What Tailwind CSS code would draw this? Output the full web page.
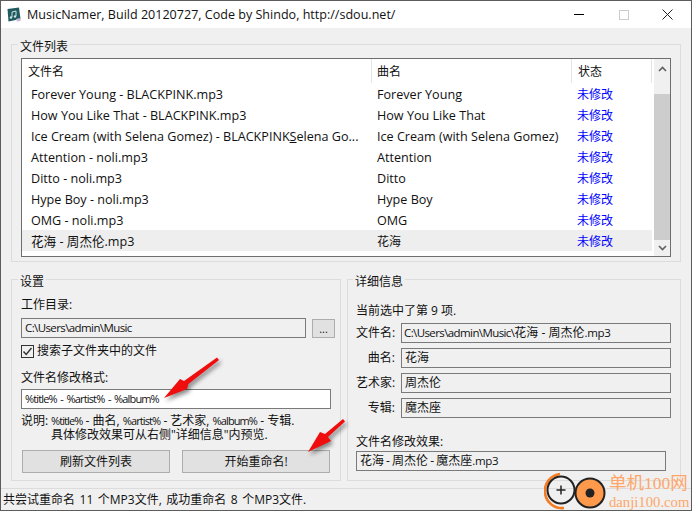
<!DOCTYPE html>
<html lang="zh-CN">
<head>
  <meta charset="UTF-8" />
  <title>MusicNamer</title>
  <script src="https://cdn.jsdelivr.net/npm/@tailwindcss/browser@4"></script>
</head>
<body class="bg-[#f0f0f0] overflow-hidden">
  <div class="relative w-[692px] h-[511px] border border-[#5c5c5c] bg-[#f0f0f0] flex flex-col font-['Open_Sans','Noto_Sans_CJK_SC',sans-serif] text-[12.6px] leading-4 text-[#111]">

    <!-- title bar -->
    <div class="h-[27px] shrink-0 bg-white flex items-center pl-[6px]">
      <svg width="14" height="15" viewBox="0 0 14 15" class="shrink-0">
        <path d="M0.5 2 L12 0.5 L13.5 12 L1.5 14.5 Z" fill="#1f5a60" />
        <path d="M5 5 L9 4 V9 M5 5 V10" stroke="#cfe3e3" stroke-width="1" fill="none" />
        <circle cx="4" cy="10.5" r="1.2" fill="#cfe3e3" />
        <circle cx="8" cy="9.5" r="1.2" fill="#cfe3e3" />
        <path d="M9 12 L13.5 11 L13.5 14 L10 14.5 Z" fill="#c9b7d8" />
      </svg>
      <span class="ml-[6px] text-[12.55px] whitespace-nowrap">MusicNamer, Build 20120727, Code by Shindo, http://sdou.net/</span>
      <div class="ml-auto flex items-center h-full">
        <div class="w-[45px] flex justify-center"><div class="w-[10px] h-px bg-black"></div></div>
        <div class="w-[45px] flex justify-center"><div class="w-[10px] h-[10px] border border-[#cccccc]"></div></div>
        <div class="w-[45px] flex justify-center pr-[2px]">
          <svg width="11" height="11" viewBox="0 0 11 11"><path d="M0.5 0.5 L10.5 10.5 M10.5 0.5 L0.5 10.5" stroke="#222" stroke-width="1" /></svg>
        </div>
      </div>
    </div>

    <!-- content -->
    <div class="flex-1 px-[10px] pt-2 flex flex-col">
      <!-- file list -->
      <fieldset class="border border-[#dcdcdc] h-[226px] px-[9px] pb-[4px] pt-[6px] w-[670px] min-w-0">
        <legend class="ml-[-3px] px-[2px] h-4 leading-[22px] text-[12px]">文件列表</legend>
        <div class="border border-[#6e6e6e] bg-white h-[199px] flex">
          <div class="w-[630px]">
            <div class="grid grid-cols-[350px_200px_80px] h-[24px] items-center text-[12px]">
              <div class="pl-[6px] pt-[2px] border-r border-[#e4e4e4] h-full flex items-center">文件名</div>
              <div class="pl-[5px] pt-[2px] border-r border-[#e4e4e4] h-full flex items-center">曲名</div>
              <div class="pl-[6px] pt-[2px] border-r border-[#e4e4e4] h-full flex items-center">状态</div>
            </div>
            <div class="grid grid-cols-[350px_200px_80px] h-[21px] pt-[2px] items-center"><div class="pl-[9px] whitespace-nowrap">Forever Young - BLACKPINK.mp3</div><div class="pl-[5px]">Forever Young</div><div class="pl-[5px] text-[12px] text-[#0000ff]">未修改</div></div>
            <div class="grid grid-cols-[350px_200px_80px] h-[21px] pt-[2px] items-center"><div class="pl-[9px] whitespace-nowrap">How You Like That - BLACKPINK.mp3</div><div class="pl-[5px]">How You Like That</div><div class="pl-[5px] text-[12px] text-[#0000ff]">未修改</div></div>
            <div class="grid grid-cols-[350px_200px_80px] h-[21px] pt-[2px] items-center"><div class="pl-[9px] whitespace-nowrap overflow-hidden">Ice Cream (with Selena Gomez) - BLACKPINK<u>S</u>elena Go...</div><div class="pl-[5px] whitespace-nowrap">Ice Cream (with Selena Gomez)</div><div class="pl-[5px] text-[12px] text-[#0000ff]">未修改</div></div>
            <div class="grid grid-cols-[350px_200px_80px] h-[21px] pt-[2px] items-center"><div class="pl-[9px]">Attention - noli.mp3</div><div class="pl-[5px]">Attention</div><div class="pl-[5px] text-[12px] text-[#0000ff]">未修改</div></div>
            <div class="grid grid-cols-[350px_200px_80px] h-[21px] pt-[2px] items-center"><div class="pl-[9px]">Ditto - noli.mp3</div><div class="pl-[5px]">Ditto</div><div class="pl-[5px] text-[12px] text-[#0000ff]">未修改</div></div>
            <div class="grid grid-cols-[350px_200px_80px] h-[21px] pt-[2px] items-center"><div class="pl-[9px]">Hype Boy - noli.mp3</div><div class="pl-[5px]">Hype Boy</div><div class="pl-[5px] text-[12px] text-[#0000ff]">未修改</div></div>
            <div class="grid grid-cols-[350px_200px_80px] h-[21px] pt-[2px] items-center"><div class="pl-[9px]">OMG - noli.mp3</div><div class="pl-[5px]">OMG</div><div class="pl-[5px] text-[12px] text-[#0000ff]">未修改</div></div>
            <div class="grid grid-cols-[350px_200px_80px] h-[21px] pt-[2px] items-center bg-[#eeeeee]"><div class="pl-[9px] whitespace-nowrap">花海 - 周杰伦.mp3</div><div class="pl-[5px] text-[12px]">花海</div><div class="pl-[5px] text-[12px] text-[#0000ff]">未修改</div></div>
          </div>
          <!-- scrollbar -->
          <div class="ml-auto w-[16px] bg-[#f0f0f0] flex flex-col items-center h-full">
            <div class="h-[35px] w-full flex justify-center pt-[7px]">
              <svg width="9" height="6" viewBox="0 0 9 6"><path d="M1 5 L4.5 1.5 L8 5" stroke="#606060" stroke-width="1.6" fill="none" /></svg>
            </div>
            <div class="w-full h-[146px] bg-[#cdcdcd]"></div>
            <div class="flex-1 w-full flex justify-center items-center">
              <svg width="9" height="6" viewBox="0 0 9 6"><path d="M1 1 L4.5 4.5 L8 1" stroke="#606060" stroke-width="1.6" fill="none" /></svg>
            </div>
          </div>
        </div>
      </fieldset>

      <div class="flex gap-[6px] mt-[9px] text-[12px]">
        <!-- settings -->
        <fieldset class="border border-[#dcdcdc] w-[330px] min-w-0 h-[210px] px-[9px]">
          <legend class="ml-[-3px] px-[2px] h-4 leading-[22px]">设置</legend>
          <div class="mt-[10px] h-4 leading-4">工作目录:</div>
          <div class="flex items-center mt-[5px]">
            <div class="w-[285px] shrink-0 h-[20px] border border-[#7a7a7a] flex items-center pl-[3px] text-[11.5px] tracking-[-0.6px]">C:\Users\admin\Music</div>
            <div class="ml-[6px] w-[23px] shrink-0 h-[19px] bg-[#e1e1e1] border border-[#adadad] flex items-center justify-center pt-[2px] text-[11px]">...</div>
          </div>
          <div class="flex items-center mt-[6px] h-[14px]">
            <div class="w-[13px] h-[13px] border border-[#333] flex items-center justify-center">
              <svg width="11" height="11" viewBox="0 0 11 11"><path d="M1.5 5.5 L4.2 8.5 L9.5 2" stroke="#333" stroke-width="1.4" fill="none" /></svg>
            </div>
            <span class="ml-[3px]">搜索子文件夹中的文件</span>
          </div>
          <div class="mt-[12px] h-4">文件名修改格式:</div>
          <div class="w-[310px] h-[20px] mt-[3px] bg-white border border-[#7a7a7a] flex items-center pl-[3px] text-[11px] tracking-[-0.85px] [word-spacing:1.5px] whitespace-pre">%title% - %artist% - %album%</div>
          <div class="flex mt-[5px] leading-[14px]">
            <span class="w-[30px] shrink-0">说明:</span>
            <div class="whitespace-nowrap"><span class="text-[11px] tracking-[-0.9px]">%title%</span> - 曲名, <span class="text-[11px] tracking-[-0.9px]">%artist%</span> - 艺术家, <span class="text-[11px] tracking-[-0.9px]">%album%</span> - 专辑.<br />具体修改效果可从右侧"详细信息"内预览.</div>
          </div>
          <div class="flex mt-[8px] ml-[1px] gap-[12px]">
            <div class="w-[148px] h-[23px] bg-[#e1e1e1] border border-[#adadad] flex items-center justify-center">刷新文件列表</div>
            <div class="w-[148px] h-[23px] bg-[#e1e1e1] border border-[#adadad] flex items-center justify-center">开始重命名!</div>
          </div>
        </fieldset>

        <!-- details -->
        <fieldset class="border border-[#dcdcdc] w-[334px] min-w-0 h-[210px] pl-[8px]">
          <legend class="ml-[-3px] px-[2px] h-4 leading-[22px]">详细信息</legend>
          <div class="mt-[16px] h-4">当前选中了第 9 项.</div>
          <div class="mt-[4px] flex flex-col gap-[5px]">
            <div class="flex items-center"><span class="w-[39px] text-right whitespace-nowrap">文件名:</span><div class="ml-[6px] w-[270px] h-[20px] border border-[#7a7a7a] flex items-center pl-[2px] whitespace-pre"><span class="text-[11.5px] tracking-[-0.6px]">C:\Users\admin\Music\</span>花海 - 周杰伦<span class="text-[11.5px] tracking-[-0.3px]">.mp3</span></div></div>
            <div class="flex items-center"><span class="w-[39px] text-right">曲名:</span><div class="ml-[6px] w-[270px] h-[20px] border border-[#7a7a7a] flex items-center pl-[3px]">花海</div></div>
            <div class="flex items-center"><span class="w-[39px] text-right whitespace-nowrap">艺术家:</span><div class="ml-[6px] w-[270px] h-[20px] border border-[#7a7a7a] flex items-center pl-[3px]">周杰伦</div></div>
            <div class="flex items-center"><span class="w-[39px] text-right">专辑:</span><div class="ml-[6px] w-[270px] h-[20px] border border-[#7a7a7a] flex items-center pl-[3px]">魔杰座</div></div>
          </div>
          <div class="mt-[16px] h-4">文件名修改效果:</div>
          <div class="mt-[1px] w-[310px] h-[20px] border border-[#7a7a7a] flex items-center pl-[3px] whitespace-pre [word-spacing:-1px]">花海 - 周杰伦 - 魔杰座<span class="text-[11.5px] tracking-[-0.3px]">.mp3</span></div>
        </fieldset>
      </div>
    </div>

    <!-- status bar -->
    <div class="h-[22px] shrink-0 border-t border-[#dcdcdc] flex items-center pl-[2px] text-[12px] whitespace-pre [word-spacing:1.4px]">共尝试重命名 11 个MP3文件, 成功重命名 8 个MP3文件.</div>

    <!-- red annotation arrows, screenshot overlay -->
    <svg class="absolute left-[-1px] top-[-1px] pointer-events-none drop-shadow-[2px_3px_2px_rgba(0,0,0,0.45)]" width="692" height="511" viewBox="0 0 692 511">
      <g fill="#f00d0d">
        <path d="M217 357.5 L219 360 L188.5 384 L187 389 L164 398 L180 379 L184 381 Z" />
        <path d="M343 419 L345 421.5 L328 437 L331 441 L308 452 L320 432 L325 434 Z" />
      </g>
    </svg>

    <!-- watermark -->
    <div class="absolute left-[543px] top-[471px] w-[149px] h-[39px] pointer-events-none">
      <svg class="absolute left-0 top-0" width="66" height="39" viewBox="0 0 66 39">
        <path d="M16 2 A16.5 16.5 0 0 0 20 36" stroke="#f47b20" stroke-width="2.6" fill="none" />
        <circle cx="17" cy="18" r="13.5" stroke="#222" stroke-width="2" fill="none" />
        <path d="M12.5 18 H21.5 M17 13.5 V22.5" stroke="#222" stroke-width="1.5" />
        <circle cx="46" cy="21" r="14.5" fill="#ff9a4d" stroke="#222" stroke-width="2" />
        <circle cx="46" cy="21" r="4.5" fill="#222" />
      </svg>
      <div class="absolute left-[65px] top-[2px] text-[17.5px] leading-[18px] text-[#ffa66a] whitespace-nowrap font-['Liberation_Serif','Noto_Sans_CJK_SC',serif]">单机100网</div>
      <div class="absolute left-[65px] top-[22px] text-[14.7px] leading-[16px] text-[#ffa66a] whitespace-nowrap font-['Liberation_Serif',serif]">danji100.com</div>
    </div>
  </div>
</body>
</html>
